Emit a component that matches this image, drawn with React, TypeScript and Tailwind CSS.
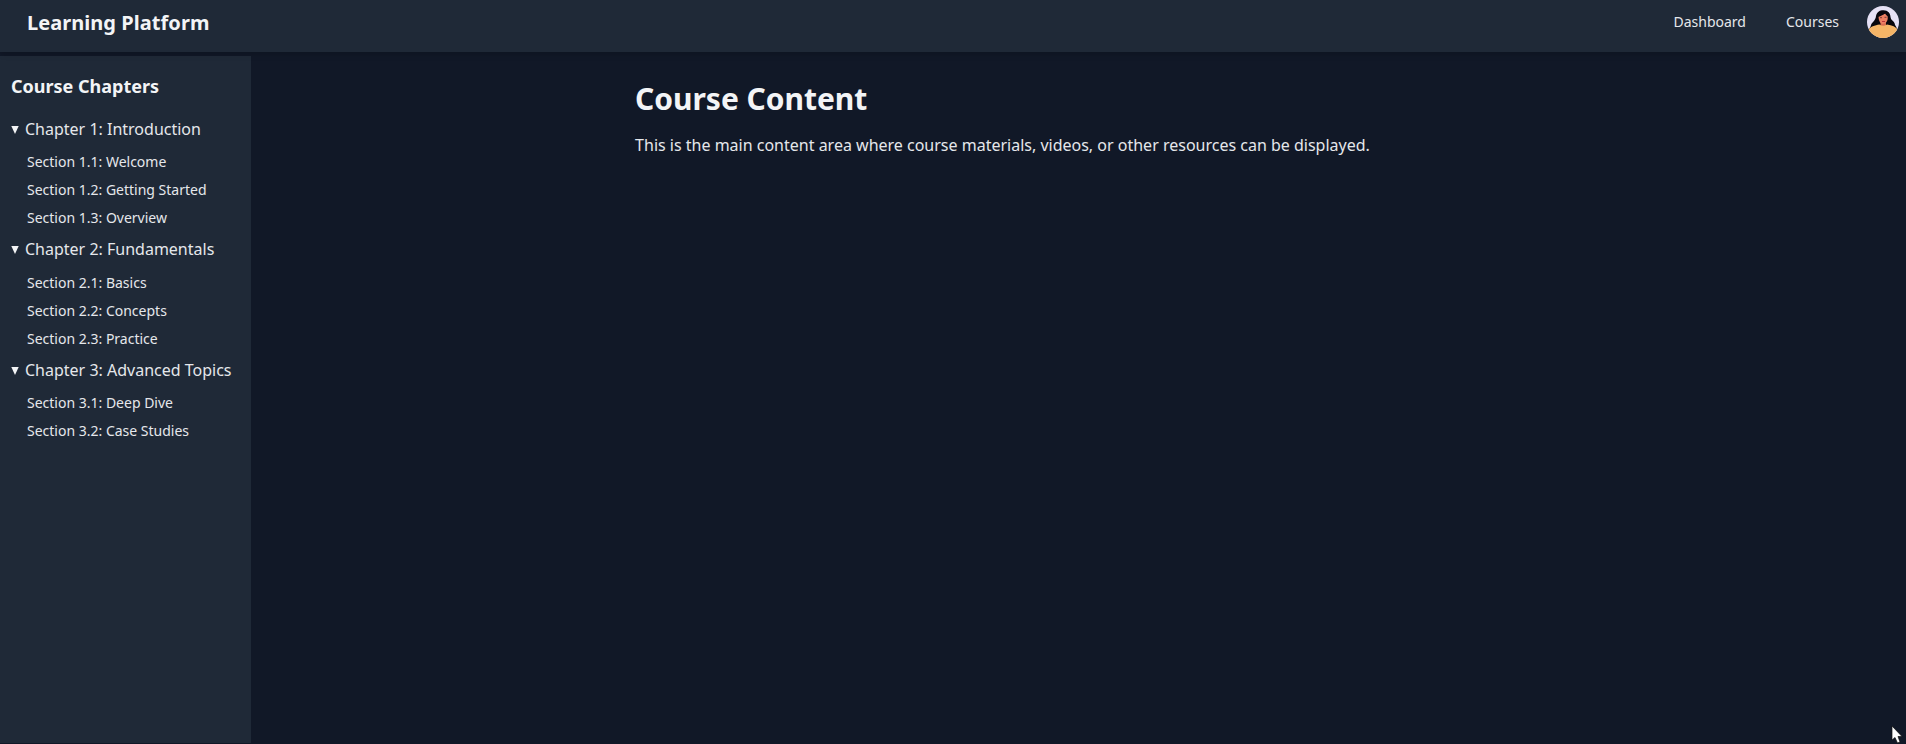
const chapters = [
  { title: "Chapter 1: Introduction", sections: ["Section 1.1: Welcome", "Section 1.2: Getting Started", "Section 1.3: Overview"] },
  { title: "Chapter 2: Fundamentals", sections: ["Section 2.1: Basics", "Section 2.2: Concepts", "Section 2.3: Practice"] },
  { title: "Chapter 3: Advanced Topics", sections: ["Section 3.1: Deep Dive", "Section 3.2: Case Studies"] },
];

function Avatar() {
  return (
    <svg viewBox="0 0 32 32" className="h-8 w-8 rounded-full">
      <rect width="32" height="32" fill="#e6e1f5" />
      <path d="M9 10C10 5 14 4 16.500 4.200C21 4.200 23.500 7.500 23.500 11C24 15 28 15 28 19C29 20 30 22 30 24H2C2 22 4 21 4 19C5 16 8.500 15 9 10Z" fill="#08070d" />
      <path d="M13.500 15H19V20H13.500Z" fill="#d96c51" />
      <path d="M11.500 9.500L19 7.500C21 9 21 12 20.500 14C19.500 17 17 18 15.500 18C12.500 17 11.500 14 11.500 9.500Z" fill="#ec7f62" />
      <path d="M10.500 11C13 10.500 16.500 9 18 7C18.500 9 20 10 21.500 10.500V7L17 5L12 7Z" fill="#08070d" />
      <path d="M13 11.700H15M17.500 11.300H19.500" stroke="#43201f" strokeWidth=".7" />
      <path d="M15 15.500H18" stroke="#b52d37" strokeWidth=".9" />
      <path d="M1 24C3 21 8 19 12.500 18.500Q16 21 20 18.500C25 19 29 21 31 24V32H1Z" fill="#f5b567" />
    </svg>
  );
}

export default function App() {
  return (
    <div className="relative flex h-[744px] flex-col overflow-hidden bg-[#111827] font-['Noto_Sans',sans-serif] text-[#e5e7eb]">
      <header className="z-10 flex h-[52px] shrink-0 items-start justify-between bg-[#1f2937] pr-[7px] pl-[27px] shadow-md">
        <h1 className="pt-[9px] text-xl leading-7 font-bold tracking-[0.05px] text-[#f3f4f6]">Learning Platform</h1>
        <nav className="flex items-start text-sm">
          <a className="mt-3 mr-10">Dashboard</a>
          <a className="mt-3 mr-7">Courses</a>
          <div className="mt-1.5"><Avatar /></div>
        </nav>
      </header>
      <div className="flex min-h-0 flex-1">
        <aside className="mt-1 mb-px w-[251px] shrink-0 bg-[#1f2937] px-[11px] pt-4">
          <h2 className="mb-[16.75px] text-lg leading-7 font-bold text-[#f3f4f6]">Course Chapters</h2>
          {chapters.map((chapter) => (
            <details key={chapter.title} open className="mb-[9.25px]">
              <summary className="flex list-none items-center gap-1.5 leading-6 whitespace-nowrap">
                <svg viewBox="0 0 8 8" className="mt-0.5 h-2 w-2 shrink-0">
                  <path d="M0.300 0H7.700L4 8Z" fill="#f3f4f6" />
                </svg>
                {chapter.title}
              </summary>
              <ul className="mt-[11.25px] ml-4 space-y-2 text-sm">
                {chapter.sections.map((section) => (
                  <li key={section}>{section}</li>
                ))}
              </ul>
            </details>
          ))}
        </aside>
        <main className="flex flex-1 justify-center pt-[29px] pr-[152px]">
          <div>
            <h2 className="mb-4 text-3xl font-bold tracking-[-0.04px] text-[#f3f4f6]">Course Content</h2>
            <p>This is the main content area where course materials, videos, or other resources can be displayed.</p>
          </div>
        </main>
      </div>
      <svg viewBox="0 0 12 18" className="absolute top-[726px] left-[1891px] h-[18px] w-3">
        <path d="M1 0V14L4 11.500L6.500 17L9 16L7 10.500H11Z" fill="#fff" stroke="#111" strokeWidth=".7" />
      </svg>
    </div>
  );
}
